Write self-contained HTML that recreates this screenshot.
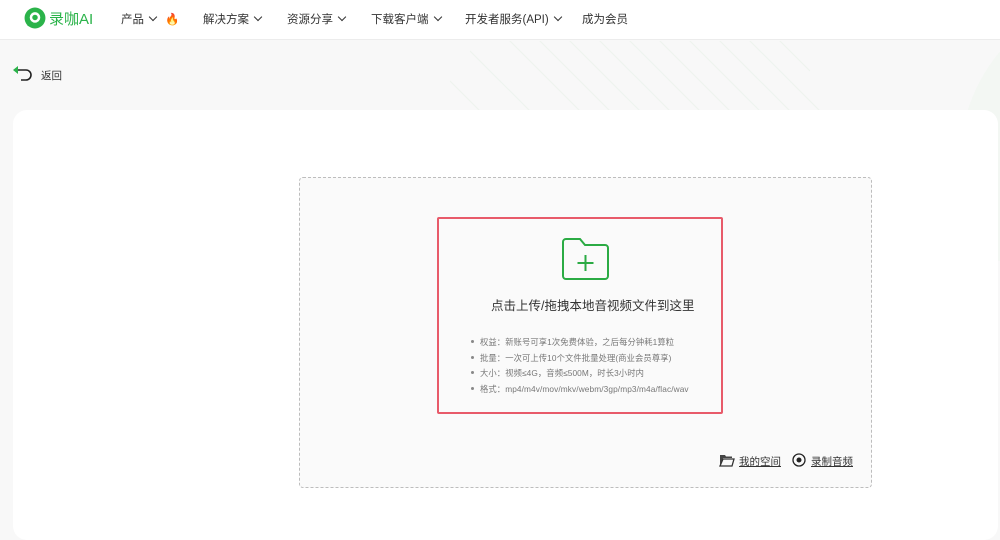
<!DOCTYPE html>
<html><head><meta charset="utf-8"><style>
*{margin:0;padding:0;box-sizing:border-box}
body{width:1000px;height:526px;overflow:hidden;background:#f8f8f8;font-family:"Liberation Sans","Noto Sans CJK SC",sans-serif;position:relative;color:#333}
.hd{position:absolute;left:0;top:0;width:1000px;height:40px;background:#fff;border-bottom:1px solid #ececec}
.nav{position:absolute;top:11px;font-size:11.5px;color:#333}
.chev{display:inline-block;width:6px;height:6px;border-right:1.5px solid #333;border-bottom:1.5px solid #333;transform:rotate(45deg);margin-left:6px;position:relative;top:-3px}
.card{position:absolute;left:13px;top:110px;width:985px;height:430px;background:#fff;border-radius:14px}
.drop{position:absolute;left:299px;top:177px;width:573px;height:311px;border:1px dashed #bdbdbd;border-radius:4px;background:#fafafa}
.red{position:absolute;left:437px;top:217px;width:286px;height:197px;border:2px solid #e85a6a;border-radius:2px}
ul{position:absolute;left:480px;top:336px;font-size:8.3px;color:#777;list-style:none;letter-spacing:0.1px}
li{height:15.5px;position:relative;padding-left:0;white-space:nowrap}
li:before{content:"";position:absolute;left:-9px;top:4px;width:3px;height:3px;border-radius:50%;background:#888}
</style></head><body>
<svg style="position:absolute;left:370px;top:41px" width="630" height="220">
<defs><clipPath id="c"><rect x="0" y="0" width="630" height="220"/></clipPath></defs>
<g stroke="#edf4ee" stroke-width="1" clip-path="url(#c)">
<path d="M0 160 L90 250M20 130 L130 240M40 100 L170 230M60 70 L210 220M80 40 L250 210M100 10 L290 200M120 -20 L330 190M150 -20 L370 200M180 -20 L410 210M210 -20 L440 210M240 -20 L470 210M270 -20 L490 200M300 -20 L510 190M330 -20 L500 150M360 -20 L470 90M390 -20 L440 30"/>
</g>
<circle cx="760" cy="120" r="170" fill="#f1f6f1" opacity="0.7"/>
</svg>
<div class="hd"></div>
<svg style="position:absolute;left:24px;top:7px" width="22" height="22" viewBox="0 0 20 20"><circle cx="10" cy="10" r="9.5" fill="#2bb34a"/><circle cx="10" cy="9.5" r="4.8" fill="#fff"/><circle cx="10" cy="9.5" r="2.5" fill="#2bb34a"/><path d="M3 17 L7 13 L6 18Z" fill="#2bb34a"/></svg>
<div style="position:absolute;left:49px;top:8px;font-size:15px;color:#2bb34a">录咖AI</div>
<div class="nav" style="left:121px">产品<span class="chev"></span> <span style="color:#f05a28;margin-left:6px">🔥</span></div>
<div class="nav" style="left:203px">解决方案<span class="chev"></span></div>
<div class="nav" style="left:287px">资源分享<span class="chev"></span></div>
<div class="nav" style="left:371px">下载客户端<span class="chev"></span></div>
<div class="nav" style="left:465px">开发者服务(API)<span class="chev"></span></div>
<div class="nav" style="left:582px">成为会员</div>
<svg style="position:absolute;left:12px;top:66px" width="22" height="16" viewBox="0 0 22 16"><path d="M5 4 H14 A5 5 0 0 1 14 14 H9" fill="none" stroke="#222" stroke-width="1.6"/><path d="M1 4 L6 0 L6 8Z" fill="#2bb34a"/></svg>
<div style="position:absolute;left:41px;top:68px;font-size:10.5px;color:#333">返回</div>
<div class="card"></div>
<div class="drop"></div>
<div class="red"></div>
<svg style="position:absolute;left:560px;top:237px" width="51" height="45" viewBox="0 0 51 45"><path d="M3 5 A3 3 0 0 1 6 2 H20 L25 8 H45 A3 3 0 0 1 48 11 V39 A3 3 0 0 1 45 42 H6 A3 3 0 0 1 3 39Z" fill="none" stroke="#2bab44" stroke-width="2"/><path d="M25.5 18 V34 M17.5 26 H33.5" stroke="#2bab44" stroke-width="2"/></svg>
<div style="position:absolute;left:491px;top:295px;font-size:12.5px;color:#333">点击上传/拖拽本地音视频文件到这里</div>
<ul>
<li>权益：新账号可享1次免费体验，之后每分钟耗1算粒</li>
<li>批量：一次可上传10个文件批量处理(商业会员尊享)</li>
<li>大小：视频≤4G，音频≤500M，时长3小时内</li>
<li>格式：mp4/m4v/mov/mkv/webm/3gp/mp3/m4a/flac/wav</li>
</ul>
<svg style="position:absolute;left:719px;top:453px" width="16" height="14" viewBox="0 0 16 14"><path d="M1 2 H6 L7 3.5 H13 V5 H4 L1 12Z" fill="#444"/><path d="M4 6 H15 L13 13 H1Z" fill="none" stroke="#333" stroke-width="1.3"/></svg>
<div style="position:absolute;left:739px;top:454px;font-size:10.5px;color:#333;text-decoration:underline">我的空间</div>
<svg style="position:absolute;left:792px;top:453px" width="14" height="14" viewBox="0 0 14 14"><circle cx="7" cy="7" r="6" fill="none" stroke="#222" stroke-width="1.3"/><circle cx="7" cy="7" r="2.5" fill="#222"/></svg>
<div style="position:absolute;left:811px;top:454px;font-size:10.5px;color:#333;text-decoration:underline">录制音频</div>
</body></html>
